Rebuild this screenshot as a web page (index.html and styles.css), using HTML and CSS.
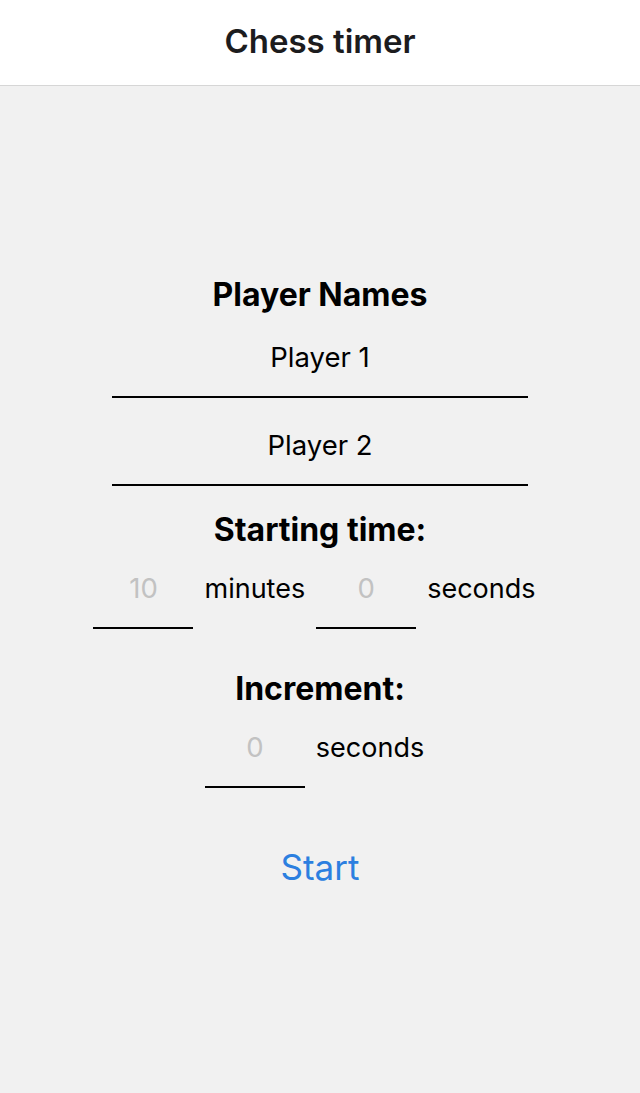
FILE: index.html
```html
<!DOCTYPE html>
<html lang="en">
<head>
<meta charset="utf-8">
<title>Chess timer</title>
<link rel="stylesheet" href="styles.css">
</head>
<body>
<header class="topbar">
  <h1 class="topbar-title">Chess timer</h1>
</header>
<main class="setup">
  <h2 class="section-title first">Player Names</h2>
  <input class="name-input" type="text" value="Player 1">
  <input class="name-input" type="text" value="Player 2">

  <h2 class="section-title start-time">Starting time:</h2>
  <div class="time-row">
    <input class="num-input" type="text" placeholder="10">
    <span class="unit">minutes</span>
    <input class="num-input" type="text" placeholder="0">
    <span class="unit">seconds</span>
  </div>

  <h2 class="section-title increment">Increment:</h2>
  <div class="time-row">
    <input class="num-input" type="text" placeholder="0">
    <span class="unit">seconds</span>
  </div>

  <button class="start-btn" type="button">Start</button>
</main>
</body>
</html>
```

FILE: styles.css
```css
html, body {
  margin: 0;
  padding: 0;
}

body {
  background: #f1f1f1;
  font-family: Inter, "Liberation Sans", Arial, sans-serif;
  color: #000;
  min-height: 1093px;
}

.topbar {
  background: #fff;
  height: 85px;
  border-bottom: 1px solid #d6d6d6;
  display: flex;
  align-items: center;
  justify-content: center;
}

.topbar-title {
  margin: 0;
  font-size: 33px;
  font-weight: 600;
  color: #1c1c1e;
  line-height: 40px;
  padding-bottom: 4px;
}

.setup {
  display: flex;
  flex-direction: column;
  align-items: center;
  padding-top: 194px;
}

.section-title {
  margin: 0;
  font-size: 32px;
  font-weight: 700;
  line-height: 30px;
  height: 30px;
}

.section-title.start-time {
  margin-top: 29px;
}

.section-title.increment {
  margin-top: 45px;
}

input {
  font-family: inherit;
  outline: none;
  background: transparent;
  border: 0;
  border-radius: 0;
  margin: 0;
  box-sizing: border-box;
  text-align: center;
  border-bottom: 2px solid #000;
  color: #000;
  font-size: 27.5px;
  line-height: 34px;
}

.name-input {
  width: 416px;
  height: 88px;
  padding: 30px 0 22px;
}

.time-row {
  display: flex;
  align-items: flex-start;
  justify-content: center;
}

.num-input {
  width: 100px;
  height: 84px;
  padding: 26px 0 22px;
}

.num-input::placeholder {
  color: #c2c2c2;
  opacity: 1;
}

.unit {
  font-size: 27px;
  line-height: 34px;
  padding-top: 27px;
  margin: 0 11px;
}

.start-btn {
  margin-top: 59px;
  background: none;
  border: 0;
  padding: 0;
  font-family: inherit;
  font-size: 35px;
  line-height: 40px;
  color: #2c7fe0;
  cursor: pointer;
}
```
